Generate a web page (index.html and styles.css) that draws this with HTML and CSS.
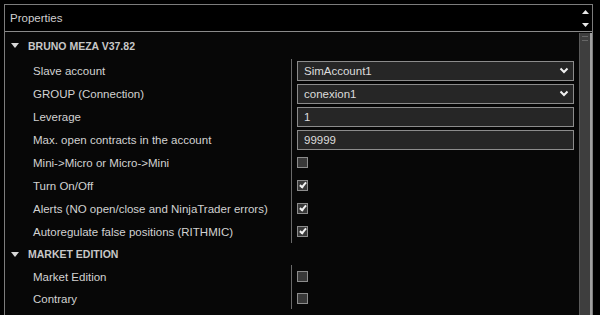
FILE: index.html
```html
<!DOCTYPE html>
<html lang="en">
<head>
    <meta charset="UTF-8">
    <title>Properties</title>
    <link rel="stylesheet" href="styles.css">
</head>
<body>
    <div class="window">
        <div class="titlebar">
            <div class="title">Properties</div>
            <div class="spin">
                <svg width="9" height="6" viewBox="0 0 9 6"><path d="M1 5 L4.5 1 L8 5 Z" fill="#e8e8e8"/></svg>
                <svg width="9" height="6" viewBox="0 0 9 6"><path d="M1 1 L4.5 5 L8 1 Z" fill="#e8e8e8"/></svg>
            </div>
        </div>
        <div class="content">
            <div class="grid">
                <div class="category first">
                    <svg class="caret" width="8" height="5" viewBox="0 0 8 5"><path d="M0 0 L8 0 L4 5 Z" fill="#d8d8d8"/></svg>
                    BRUNO MEZA V37.82
                </div>
                <div class="rows">
                    <div class="row">
                        <div class="label">Slave account</div>
                        <div class="value">
                            <div class="field">SimAccount1
                                <svg class="chevron" width="10" height="7" viewBox="0 0 10 7"><path d="M1.5 1.5 L5 5 L8.5 1.5" stroke="#f0f0f0" stroke-width="2" fill="none"/></svg>
                            </div>
                        </div>
                    </div>
                    <div class="row">
                        <div class="label">GROUP (Connection)</div>
                        <div class="value">
                            <div class="field">conexion1
                                <svg class="chevron" width="10" height="7" viewBox="0 0 10 7"><path d="M1.5 1.5 L5 5 L8.5 1.5" stroke="#f0f0f0" stroke-width="2" fill="none"/></svg>
                            </div>
                        </div>
                    </div>
                    <div class="row">
                        <div class="label">Leverage</div>
                        <div class="value"><div class="field">1</div></div>
                    </div>
                    <div class="row">
                        <div class="label">Max. open contracts in the account</div>
                        <div class="value"><div class="field">99999</div></div>
                    </div>
                    <div class="row">
                        <div class="label">Mini-&gt;Micro or Micro-&gt;Mini</div>
                        <div class="value"><span class="check"></span></div>
                    </div>
                    <div class="row">
                        <div class="label">Turn On/Off</div>
                        <div class="value"><span class="check on"></span></div>
                    </div>
                    <div class="row">
                        <div class="label">Alerts (NO open/close and NinjaTrader errors)</div>
                        <div class="value"><span class="check on"></span></div>
                    </div>
                    <div class="row">
                        <div class="label">Autoregulate false positions (RITHMIC)</div>
                        <div class="value"><span class="check on"></span></div>
                    </div>
                </div>
                <div class="category">
                    <svg class="caret" width="8" height="5" viewBox="0 0 8 5"><path d="M0 0 L8 0 L4 5 Z" fill="#d8d8d8"/></svg>
                    MARKET EDITION
                </div>
                <div class="rows compact">
                    <div class="row">
                        <div class="label">Market Edition</div>
                        <div class="value"><span class="check"></span></div>
                    </div>
                    <div class="row">
                        <div class="label">Contrary</div>
                        <div class="value"><span class="check"></span></div>
                    </div>
                </div>
            </div>
            <div class="scrollbar">
                <div class="thumb">
                    <div class="grip"></div>
                </div>
            </div>
        </div>
    </div>
</body>
</html>
```

FILE: styles.css
```css
body {
    margin: 0;
    padding: 0;
    background-color: #000;
    font-family: "Liberation Sans", Arial, sans-serif;
    font-size: 11.5px;
    color: #d2d2d2;
    height: 315px;
    overflow: hidden;
}
.window {
    margin: 4px 7px 0 4px;
    height: 311px;
    border: 1px solid #7c7c7c;
    border-bottom: none;
    box-sizing: border-box;
    display: flex;
    flex-direction: column;
}
.titlebar {
    height: 27px;
    display: flex;
    border-bottom: 1px solid #8a8a8a;
    box-sizing: border-box;
}
.title {
    flex: 1;
    padding-left: 5px;
    line-height: 26px;
    color: #cfcfcf;
}
.spin {
    width: 13px;
    display: flex;
    flex-direction: column;
    align-items: center;
    justify-content: center;
    gap: 7px;
}
.content {
    flex: 1;
    display: flex;
    background-color: #070707;
}
.grid {
    flex: 1;
}
.category {
    height: 22px;
    display: flex;
    align-items: center;
    padding-left: 6px;
    font-size: 10.5px;
    font-weight: bold;
    color: #c8c8c8;
}
.category.first {
    height: 27px;
}
.caret {
    margin-right: 9px;
}
.row {
    height: 23px;
    display: flex;
}
.compact .row {
    height: 22px;
}
.label {
    width: 258px;
    padding-left: 28px;
    line-height: 24px;
    white-space: nowrap;
}
.value {
    flex: 1;
    border-left: 1px solid #6a6a6a;
    display: flex;
    align-items: center;
    padding: 0 5px;
}
.field {
    flex: 1;
    height: 20px;
    box-sizing: border-box;
    border: 1px solid #8c8c8c;
    background-color: #262626;
    color: #dcdcdc;
    padding-left: 6px;
    line-height: 18px;
    display: flex;
    align-items: center;
    justify-content: space-between;
}
.chevron {
    margin-right: 4px;
}
.check {
    width: 11px;
    height: 11px;
    box-sizing: border-box;
    border: 1px solid #8c8c8c;
    background-color: #383838;
    position: relative;
}
.check.on::after {
    content: "";
    position: absolute;
    left: 3px;
    top: 0px;
    width: 2px;
    height: 5px;
    border: solid #f2f2f2;
    border-width: 0 2px 2px 0;
    transform: rotate(40deg);
}
.scrollbar {
    width: 13px;
    display: flex;
}
.thumb {
    flex: 1;
    margin-top: 1px;
    border-left: 1px solid #5a5a5a;
    border-right: 2px solid #a0a0a0;
    background-color: #3e3e3e;
}
.grip {
    height: 3px;
    margin: 3px 2px 0 2px;
    border-top: 1px solid #666;
    border-bottom: 1px solid #666;
}
```
